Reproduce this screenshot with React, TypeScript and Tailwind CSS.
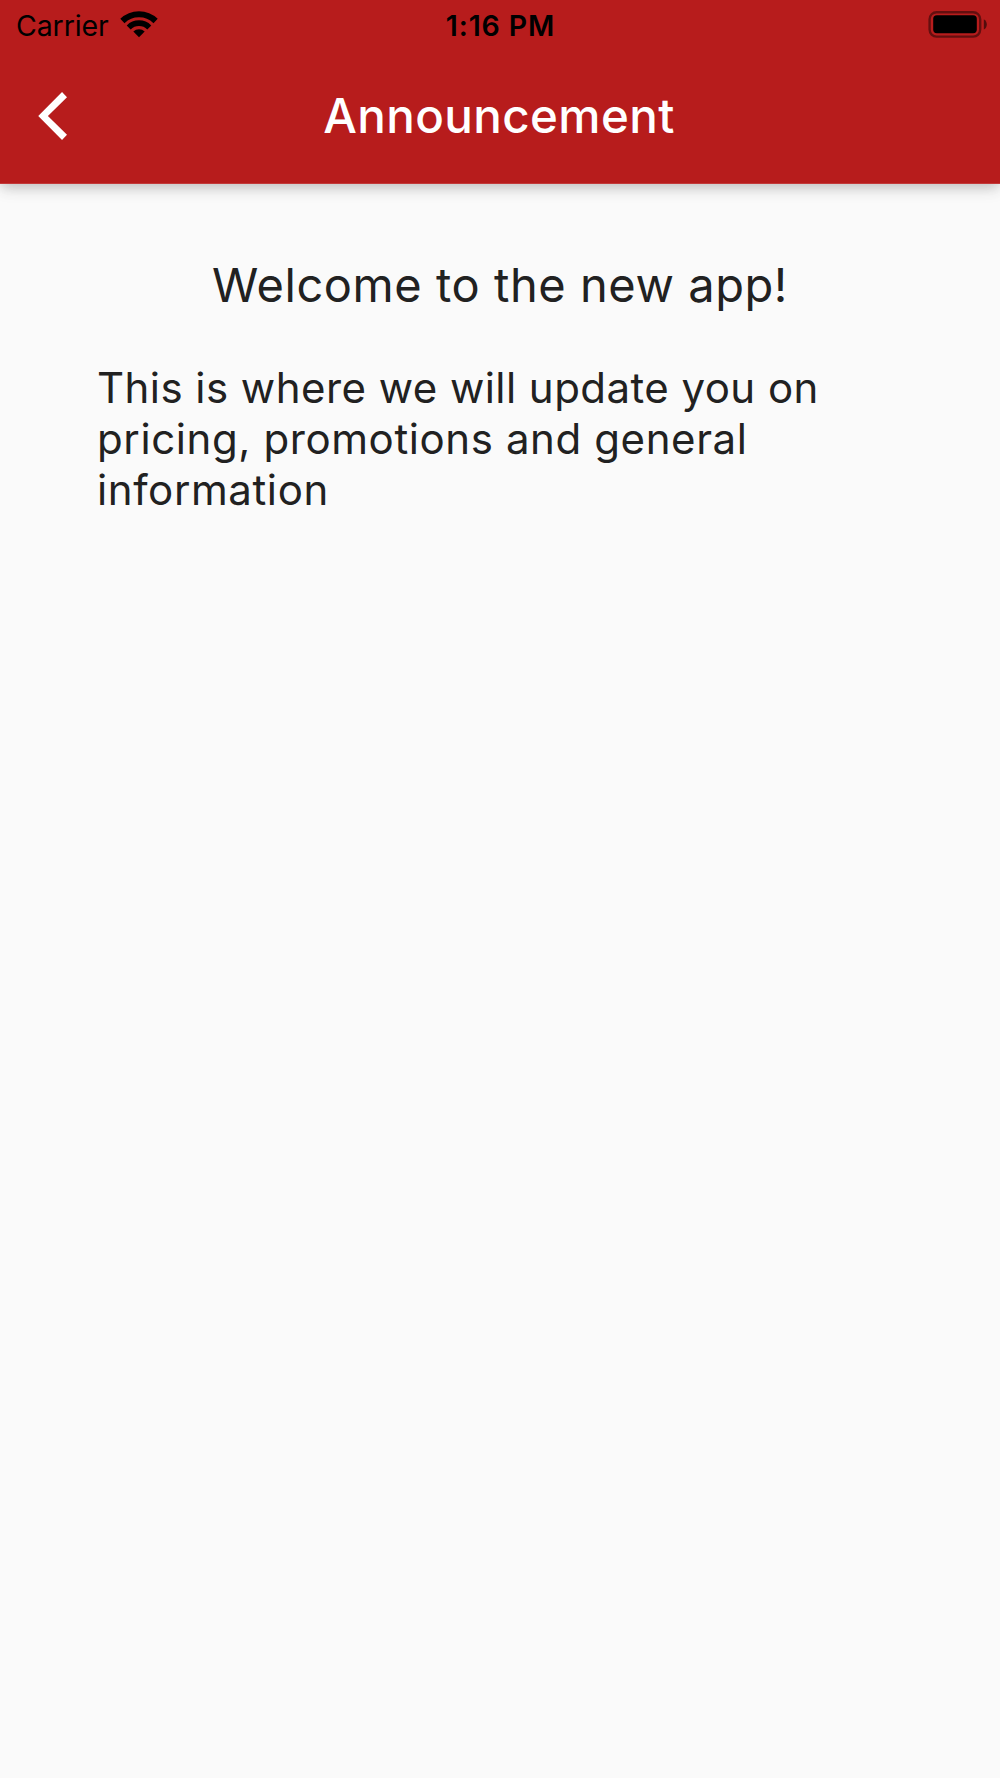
const WifiIcon = () => (
  <svg viewBox="0 0 38 28" className="h-7 w-[38px]" fill="none">
    <path d="M2.4 11a23.7 23.7 0 0 1 33.2 0" stroke="#000" strokeWidth="6" />
    <path d="M8.7 17.4a14.6 14.6 0 0 1 20.6 0" stroke="#000" strokeWidth="5.6" />
    <path d="M13.3 21.6a8.2 8.2 0 0 1 11.4 0L19 27.2z" fill="#000" />
  </svg>
);

const BatteryIcon = () => (
  <svg viewBox="0 0 60 28" className="h-7 w-[60px]">
    <rect
      x="2.6"
      y="2.2"
      width="50.6"
      height="24.4"
      rx="7"
      fill="none"
      stroke="#000"
      strokeOpacity="0.45"
      strokeWidth="2.4"
    />
    <rect x="6.2" y="5.2" width="43.6" height="18" rx="3.6" fill="#000" />
    <path d="M56.8 9.2c4 2 4 8.4 0 10.4z" fill="#000" fillOpacity="0.55" />
  </svg>
);

const StatusBar = () => (
  <div className="grid h-12 grid-cols-3 items-start pl-4 pr-[13px] text-[28.5px] leading-[30px] text-black">
    <div className="flex items-start gap-[11px] pt-2.5">
      <span className="pt-px tracking-[-0.1px]">Carrier</span>
      <WifiIcon />
    </div>
    <span className="pt-[11px] pr-0.5 text-center font-[560] tracking-[0.9px]">
      1:16 PM
    </span>
    <div className="flex justify-end pt-2.5">
      <BatteryIcon />
    </div>
  </div>
);

const AppBar = () => (
  <div className="grid h-[135px] grid-cols-[200px_1fr_200px] items-center">
    <button aria-label="Back" className="pl-[38px] text-white">
      <svg viewBox="0 0 24 24" className="size-[58px]" fill="currentColor">
        <path d="M12 4.2L9.95 2.1 0.1 12l9.85 9.9 2.05-2.1L4.1 12z" />
      </svg>
    </button>
    <h1 className="pr-0.5 text-center text-[47.5px] leading-[56px] font-medium tracking-[0.4px] text-white">
      Announcement
    </h1>
  </div>
);

export default function App() {
  return (
    <div className="h-[1778px] w-[1000px] overflow-hidden bg-[#fafafa] font-['Inter',sans-serif] whitespace-nowrap text-[#212121]">
      <header className="relative h-[184px] border-b border-[#c23a3a] bg-[#b71c1c] shadow-[0_4px_10px_-2px_rgba(0,0,0,0.11),0_6px_14px_0_rgba(0,0,0,0.1),0_2px_20px_0_rgba(0,0,0,0.05)]">
        <StatusBar />
        <AppBar />
      </header>
      <main className="pt-[72px]">
        <h2 className="text-center text-[47px] leading-[58px] tracking-[0.55px]">
          Welcome to the new app!
        </h2>
        <p className="pt-12 pl-[97px] text-[42px] leading-[51px] tracking-[0.6px]">
          <span className="tracking-[0.45px]">
            This is where we will update you on
          </span>
          <br />
          pricing, promotions and general
          <br />
          information
        </p>
      </main>
    </div>
  );
}
